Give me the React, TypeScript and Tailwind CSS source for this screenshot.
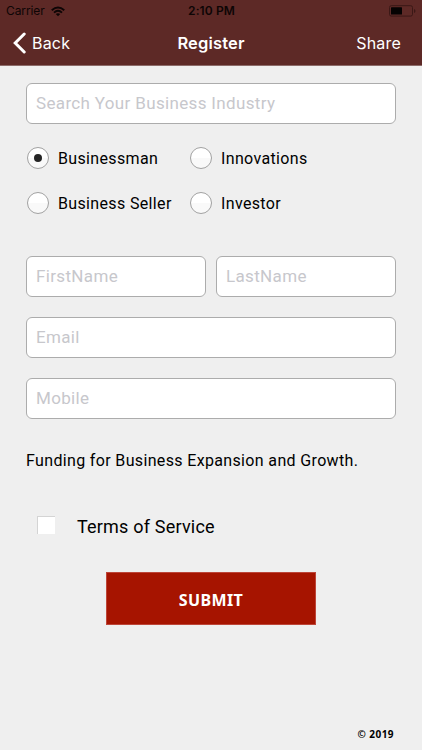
import { useState } from "react";

const roles = ["Businessman", "Innovations", "Business Seller", "Investor"];

interface FieldProps {
  placeholder: string;
  type?: string;
}

function Field({ placeholder, type = "text" }: FieldProps) {
  return (
    <input
      type={type}
      placeholder={placeholder}
      className="block h-[41px] w-full min-w-0 rounded-[6px] border border-[#acacac] bg-white px-[9px] pb-px text-[17px] tracking-[0.34px] text-black placeholder:text-[#c7c7cc] outline-none"
    />
  );
}

function StatusBar() {
  return (
    <div className="flex h-[22px] items-center px-[6px] text-[#0d0505]">
      <div className="flex flex-1 items-center gap-[6px]">
        <span className="font-['Inter',sans-serif] text-[12px] tracking-[-0.1px]">Carrier</span>
        <svg width="14" height="11" viewBox="0 0 15 11" fill="none" stroke="currentColor" strokeWidth="2">
          <path d="M.8 4.1Q7.5-1.8 14.2 4.1" />
          <path d="M3.2 6.7Q7.5 2.8 11.8 6.7" />
          <path d="M7.5 10.7 5.1 8.3Q7.5 6.3 9.9 8.3Z" fill="currentColor" stroke="none" />
        </svg>
      </div>
      <span className="ml-px font-['Inter',sans-serif] text-[12px] font-semibold tracking-[0.1px]">2:10 PM</span>
      <div className="flex flex-1 justify-end">
        <svg width="27" height="12" viewBox="0 0 27 12">
          <rect x=".5" y=".7" width="23" height="10.4" rx="1.8" fill="none" stroke="#3b1816" />
          <rect x="2" y="2.2" width="11" height="7.4" rx=".5" fill="#050202" />
          <path d="M25 4v4Q26.5 7.3 26.5 6T25 4" fill="#3b1816" />
        </svg>
      </div>
    </div>
  );
}

export default function App() {
  const [role, setRole] = useState("Businessman");

  return (
    <div className="flex h-[750px] w-[422px] flex-col overflow-hidden bg-[#efefef] font-['Roboto',sans-serif] text-black">
      <header className="h-[66px] border-b border-[#8c6b69] bg-[#5d2926]">
        <StatusBar />
        <div className="grid h-[42px] grid-cols-[1fr_auto_1fr] items-center font-['Inter',sans-serif] text-[16px] text-white">
          <button className="flex items-center gap-[6px] pl-[13px]">
            <svg width="13" height="22" viewBox="0 0 13 22" fill="none" stroke="currentColor" strokeWidth="3" strokeLinecap="round">
              <path d="M11.2 2 2.2 11l9 9" />
            </svg>
            <span className="tracking-[0.2px]">Back</span>
          </button>
          <h1 className="text-[16.5px] font-semibold tracking-[0.15px]">Register</h1>
          <button className="pr-[21px] text-right tracking-[0.2px]">Share</button>
        </div>
      </header>

      <main className="flex flex-1 flex-col px-[26px] pt-[17px]">
        <Field placeholder="Search Your Business Industry" />

        <div className="mt-[22px] grid grid-cols-[163px_1fr] gap-y-[22px] pl-px">
          {roles.map((name) => (
            <label key={name} className="flex h-[23px] items-center gap-[9px] text-[16px] tracking-[0.35px]">
              <input
                type="radio"
                name="role"
                checked={role === name}
                onChange={() => setRole(name)}
                className="peer sr-only"
              />
              <span className="flex size-[22px] items-center justify-center rounded-full border border-[#a2a2a2] bg-linear-to-b from-white from-50% to-[#f9f9f9] to-50%">
                {role === name && <span className="size-2 rounded-full bg-[#252525]"></span>}
              </span>
              <span className="whitespace-nowrap pt-[2px]">{name}</span>
            </label>
          ))}
        </div>

        <div className="mt-[42px] grid grid-cols-2 gap-[10px]">
          <Field placeholder="FirstName" />
          <Field placeholder="LastName" />
        </div>
        <div className="mt-5 space-y-5">
          <Field placeholder="Email" type="email" />
          <Field placeholder="Mobile" type="tel" />
        </div>

        <p className="mt-[30px] h-6 whitespace-nowrap text-[16px] leading-6 tracking-[0.35px]">
          Funding for Business Expansion and Growth.
        </p>

        <label className="mt-[41px] flex h-6 items-center gap-[22px] pl-[11px] text-[18px] tracking-[0.2px]">
          <input type="checkbox" className="mb-[2px] size-[18px] appearance-none border-l border-t border-[#d4d4d4] bg-white" />
          <span>Terms of Service</span>
        </label>

        <button className="mt-[34px] h-[53px] w-[210px] self-center border border-[#bd4538] bg-[#a61400] pt-[2px] font-['Noto_Sans',sans-serif] text-[16px] font-bold tracking-[0.4px] text-white">
          SUBMIT
        </button>

        <footer className="mb-[9px] mt-auto self-end pr-[2px] font-['Noto_Sans',sans-serif] text-[10px] font-bold leading-[14px] tracking-[0.45px]">
          © 2019
        </footer>
      </main>
    </div>
  );
}
